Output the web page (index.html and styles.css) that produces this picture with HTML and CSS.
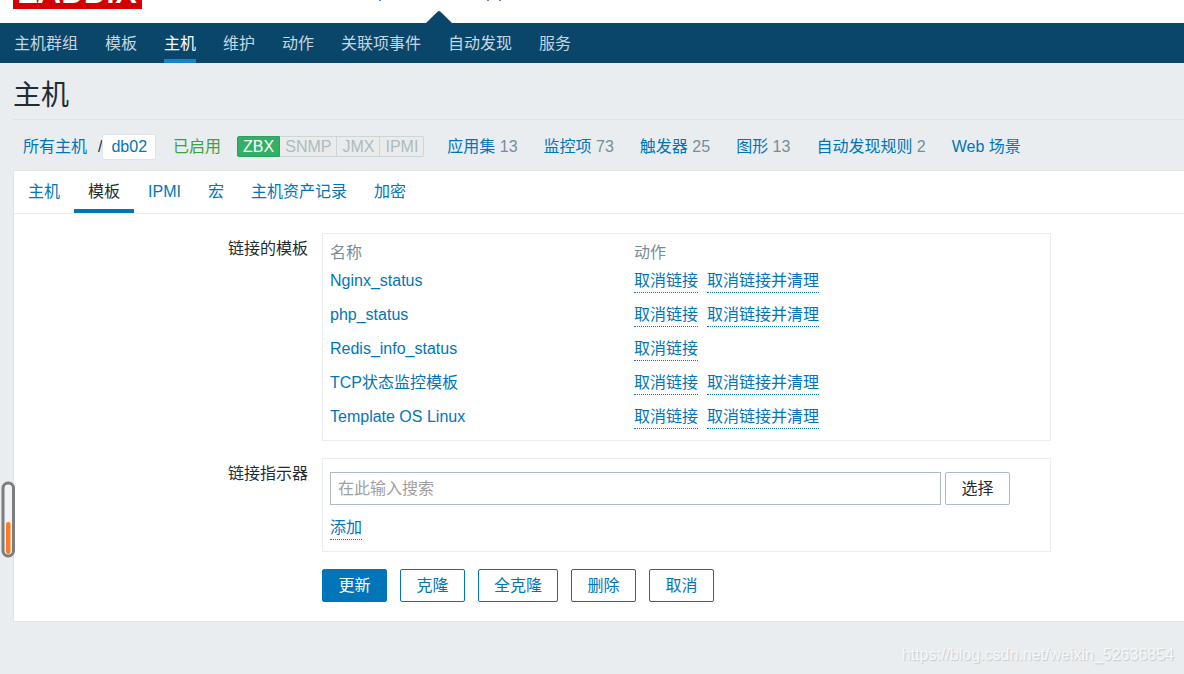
FILE: index.html
```html
<!DOCTYPE html>
<html lang="zh-CN">
<head>
<meta charset="utf-8">
<title>主机</title>
<link rel="stylesheet" href="styles.css">
</head>
<body>
<header class="top">
  <a class="logo" href="#">ZABBIX</a>
  <svg class="top-marks" width="126" height="2" viewBox="0 0 126 2" aria-hidden="true"><path d="M3 .5h2" stroke="#4e8fc0"/><path d="M111 .5h2M123 .5h2" stroke="#6c84b4"/></svg>
  <svg class="pointer" width="26" height="12" viewBox="0 0 26 12" aria-hidden="true"><path d="M0 12L11.500 .8Q13 -.6 14.500 .8L26 12z" fill="#0a466a"/></svg>
</header>
<nav class="subnav">
  <a href="#">主机群组</a><a href="#">模板</a><a class="current" href="#">主机</a><a href="#">维护</a><a href="#">动作</a><a href="#">关联项事件</a><a href="#">自动发现</a><a href="#">服务</a>
</nav>
<main class="page">
  <h1 class="title">主机</h1>
  <div class="crumbs">
    <div class="path"><a href="#">所有主机</a><span class="slash">/</span><a class="host" href="#">db02</a></div>
    <span class="enabled">已启用</span>
    <div class="status"><span class="on">ZBX</span><span>SNMP</span><span>JMX</span><span>IPMI</span></div>
    <div class="counts">
      <span><a href="#">应用集</a> 13</span>
      <span><a href="#">监控项</a> 73</span>
      <span><a href="#">触发器</a> 25</span>
      <span><a href="#">图形</a> 13</span>
      <span><a href="#">自动发现规则</a> 2</span>
      <span><a href="#">Web 场景</a></span>
    </div>
  </div>
  <section class="panel">
    <nav class="tabs">
      <a href="#">主机</a><a class="selected" href="#">模板</a><a href="#">IPMI</a><a href="#">宏</a><a href="#">主机资产记录</a><a href="#">加密</a>
    </nav>
    <form class="form">
      <span class="label" id="linked">链接的模板</span>
      <div class="box">
        <table class="templates" aria-labelledby="linked">
          <thead><tr><th>名称</th><th>动作</th></tr></thead>
          <tbody>
            <tr><td><a href="#">Nginx_status</a></td><td><button type="button" class="link">取消链接</button><button type="button" class="link">取消链接并清理</button></td></tr>
            <tr><td><a href="#">php_status</a></td><td><button type="button" class="link">取消链接</button><button type="button" class="link">取消链接并清理</button></td></tr>
            <tr><td><a href="#">Redis_info_status</a></td><td><button type="button" class="link">取消链接</button></td></tr>
            <tr><td><a href="#">TCP状态监控模板</a></td><td><button type="button" class="link">取消链接</button><button type="button" class="link">取消链接并清理</button></td></tr>
            <tr><td><a href="#">Template OS Linux</a></td><td><button type="button" class="link">取消链接</button><button type="button" class="link">取消链接并清理</button></td></tr>
          </tbody>
        </table>
      </div>
      <label class="label" for="search">链接指示器</label>
      <div class="box picker">
        <div class="search"><input id="search" type="text" placeholder="在此输入搜索"><button type="button" class="btn grey">选择</button></div>
        <button type="button" class="link">添加</button>
      </div>
      <div class="actions">
        <button type="button" class="btn primary">更新</button>
        <button type="button" class="btn">克隆</button>
        <button type="button" class="btn">全克隆</button>
        <button type="button" class="btn">删除</button>
        <button type="button" class="btn">取消</button>
      </div>
    </form>
  </section>
</main>
<footer class="mark">https://blog.csdn.net/weixin_52636854</footer>
<svg class="gauge" width="16" height="78" viewBox="0 0 16 78" aria-hidden="true"><rect x="3" y="2" width="10.500" height="73" rx="5.200" fill="#f2f3f5" stroke="#7b7d7e" stroke-width="3"/><rect x="6" y="41" width="4.500" height="32" rx="2.200" fill="#ff7a22"/></svg>
</body>
</html>
```
FILE: styles.css
```css
* { box-sizing: border-box; }
body {
  margin: 0;
  background: #e9edf0;
  color: #1f2c33;
  font: 16px/24px "Liberation Sans", "Noto Sans CJK SC", sans-serif;
}
a { color: #0275b8; text-decoration: none; }
button, input { font: inherit; margin: 0; }
.top {
  position: relative;
  display: flex;
  height: 23px;
  padding-left: 13px;
  overflow: hidden;
  background: #fff;
}
.logo {
  align-self: flex-end;
  flex: none;
  width: 129px;
  padding-bottom: 2px;
  margin-bottom: 14px;
  background: #d40000;
  color: #fff;
  font: 600 34px/34px "Open Sans", sans-serif;
  text-align: center;
}
.top-marks { position: absolute; left: 376px; top: 0; }
.pointer { position: absolute; left: 426px; bottom: 0; }
.subnav {
  display: flex;
  gap: 27px;
  height: 40px;
  padding-left: 14px;
  background: #0a466a;
}
.subnav a { height: 40px; color: #c6d6e0; line-height: 42px; }
.subnav .current { color: #fff; border-bottom: 4px solid #1186cd; }
.page { padding-left: 13px; }
.title {
  margin: 0;
  padding: 16px 0 6px;
  border-bottom: 1px solid #dfe4e7;
  font-size: 28px;
  font-weight: 400;
  line-height: 34px;
}
.crumbs { display: flex; align-items: center; height: 50px; padding: 3px 0 0 10px; }
.path { display: flex; align-items: center; }
.slash { padding-left: 11px; }
.host {
  padding: 0 8px;
  background: #fff;
  border: 1px solid #e0e5e8;
  border-radius: 2px;
}
.enabled { margin-left: 17px; color: #429e47; }
.status { display: flex; margin-left: 16px; line-height: 19px; }
.status span {
  padding: 0 5px;
  border: 1px solid #ccd5d9;
  border-left-width: 0;
  background: #ebebeb;
  color: #acbbc2;
}
.status .on { background: #34af67; border: 1px solid #2f9f5e; border-radius: 2px 0 0 2px; color: #fff; }
.status span:last-child { border-radius: 0 2px 2px 0; }
.counts { display: flex; gap: 26px; margin-left: 23px; color: #768d99; }
.panel {
  background: #fff;
  border: 1px solid #dfe4e7;
  border-right: 0;
  padding-bottom: 19px;
}
.tabs { display: flex; gap: 1px; padding-left: 1px; border-bottom: 1px solid #ebeef0; }
.tabs a { padding: 9px 13px; }
.tabs .selected { padding: 9px 14px 5px; border-bottom: 4px solid #0275b8; color: #1f2c33; }
.form {
  display: grid;
  grid-template-columns: 294px minmax(0, 729px);
  gap: 17px 14px;
  padding-top: 19px;
}
.label { padding-top: 4px; text-align: right; }
.box { border: 1px solid #ebeef0; padding: 7px; }
.templates { width: 100%; border-collapse: collapse; }
.templates th { padding: 0 0 4px; font-weight: 400; text-align: left; color: #768d99; }
.templates td { height: 34px; padding: 0; vertical-align: top; }
.templates tr:last-child td { height: 28px; }
.templates th:first-child { width: 304px; }
.link {
  padding: 0;
  border: 0;
  border-bottom: 1px dotted #0275b8;
  background: none;
  color: #0275b8;
  line-height: 22px;
}
.link + .link { margin-left: 9px; }
.picker { padding: 13px 7px 11px; }
.search { display: flex; gap: 4px; margin: 0 33px 11px 0; }
.search input {
  flex: 1;
  min-width: 0;
  height: 33px;
  padding: 0 7px;
  border: 1px solid #acbbc2;
  background: #fff;
}
.search input::placeholder { color: #a0a0a0; opacity: 1; }
.btn {
  min-width: 65px;
  height: 33px;
  padding: 0 15px;
  border: 1px solid #0275b8;
  border-radius: 2px;
  background: #fff;
  color: #0275b8;
}
.btn.grey { border-color: #acbbc2; color: #1f2c33; }
.btn.primary { background: #0275b8; color: #fff; }
.actions { grid-column: 2; display: flex; gap: 13px; }
.mark {
  padding: 21px 10px 0 0;
  text-align: right;
  color: #f6f8f9;
  text-shadow: 1px 1px 1px #c4c8cb;
}
.gauge { position: fixed; left: 0; top: 481px; }
```
